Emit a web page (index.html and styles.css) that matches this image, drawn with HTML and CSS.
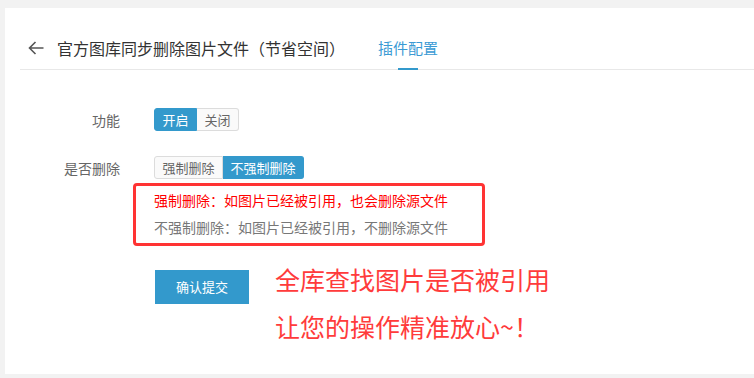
FILE: index.html
```html
<!DOCTYPE html>
<html lang="zh-CN">
<head>
<meta charset="utf-8">
<title>插件配置</title>
<link rel="stylesheet" href="styles.css">
</head>
<body>
<div class="panel">
  <div class="header">
    <span class="back">
      <svg width="16" height="14" viewBox="0 0 16 14"><path d="M15.5 7H1.5M7.5 1L1.5 7L7.5 13" fill="none" stroke="#555" stroke-width="1.6"/></svg>
    </span>
    <span class="title">官方图库同步删除图片文件（节省空间）</span>
    <span class="tab">
      <span class="tab-text">插件配置</span>
      <span class="tab-bar"></span>
    </span>
  </div>
  <div class="form">
    <div class="row">
      <div class="label">功能</div>
      <div class="group">
        <span class="btn active">开启</span><span class="btn">关闭</span>
      </div>
    </div>
    <div class="row row2">
      <div class="label">是否删除</div>
      <div class="group">
        <span class="btn">强制删除</span><span class="btn active">不强制删除</span>
      </div>
    </div>
    <div class="hint">
      <div class="hint-red">强制删除：如图片已经被引用，也会删除源文件</div>
      <div class="hint-gray">不强制删除：如图片已经被引用，不删除源文件</div>
    </div>
    <div class="submit-row">
      <div class="submit">确认提交</div>
      <div class="promo">
        <div>全库查找图片是否被引用</div>
        <div>让您的操作精准放心~！</div>
      </div>
    </div>
  </div>
</div>
</body>
</html>
```
FILE: styles.css
```css
html, body {
  margin: 0;
  padding: 0;
}
body {
  background: #f2f2f2;
  font-family: "Noto Sans CJK SC", "Noto Sans", sans-serif;
  padding-top: 8px;
  height: 378px;
  box-sizing: border-box;
  overflow: hidden;
}
.panel {
  margin-left: 5px;
  height: 366px;
  background: #fff;
}
.header {
  margin-left: 15px;
  padding-top: 27px;
  padding-left: 8px;
  display: flex;
  align-items: flex-start;
  border-bottom: 1px solid #e8e8e8;
}
.back {
  height: 26px;
  display: flex;
  align-items: center;
  width: 16px;
  margin-right: 13px;
}
.back svg { display: block; }
.title {
  font-size: 16px;
  line-height: 26px;
  color: #333;
}
.tab {
  margin-left: 33px;
  display: flex;
  flex-direction: column;
  align-items: center;
  margin-bottom: -1px;
}
.tab-text {
  font-size: 15px;
  line-height: 26px;
  color: #3a9ad4;
}
.tab-bar {
  margin-top: 7px;
  width: 20px;
  height: 2px;
  background: #3399cc;
}
.form {
  padding-top: 38px;
}
.row {
  display: flex;
  align-items: center;
  height: 23px;
}
.row2 {
  margin-top: 25px;
}
.label {
  margin-left: 15px;
  width: 100px;
  text-align: right;
  font-size: 14px;
  color: #666;
  margin-right: 34px;
}
.group {
  display: flex;
  height: 23px;
}
.btn {
  font-size: 13px;
  line-height: 21px;
  padding: 0 7.5px;
  color: #666;
  background: #fafafa;
  border: 1px solid #dcdcdc;
}
.btn:first-child {
  border-radius: 3px 0 0 3px;
}
.btn:last-child {
  border-left: 0;
  border-radius: 0 3px 3px 0;
}
.btn.active {
  background: #3399cc;
  border-color: #3399cc;
  color: #fff;
}
.hint {
  margin-top: 4px;
  margin-left: 128px;
  width: 352px;
  box-sizing: border-box;
  border: 3px solid #f33;
  border-radius: 4px;
  padding: 1px 18px 2px;
  font-size: 14px;
  line-height: 27px;
}
.hint-red { color: #f00; }
.hint-gray { color: #777; }
.submit-row {
  display: flex;
  align-items: flex-start;
  margin-top: 10px;
}
.submit {
  margin-left: 150px;
  margin-top: 14px;
  width: 94px;
  height: 34px;
  line-height: 34px;
  text-align: center;
  background: #3399cc;
  color: #fff;
  font-size: 13px;
}
.promo {
  margin-left: 26px;
  font-size: 25px;
  line-height: 47px;
  color: #ff3b3b;
}
```
